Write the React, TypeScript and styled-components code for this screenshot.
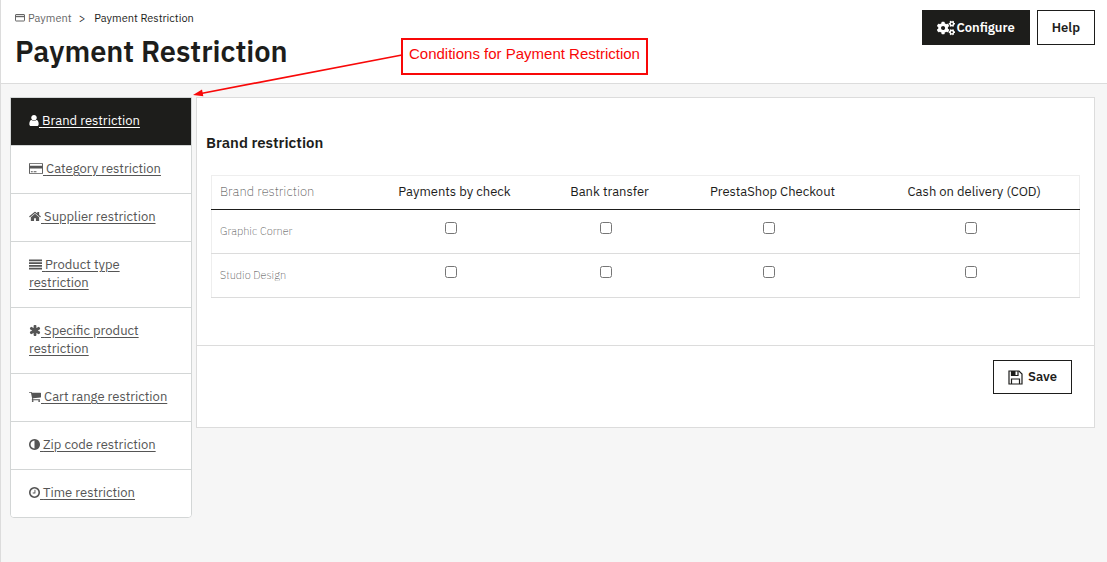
import React from "react";
import styled, { createGlobalStyle } from "styled-components";
import { FaCogs } from "react-icons/fa";

const GlobalStyle = createGlobalStyle`
  *, *::before, *::after { box-sizing: border-box; }
  body {
    margin: 0;
    background: #f6f6f6;
    color: #1d1d1b;
    font-family: "IBM Plex Sans", Roboto, "Liberation Sans", sans-serif;
    font-size: 13px;
    line-height: 18px;
  }
`;

const Page = styled.div`
  position: relative;
  min-height: 100vh;
  border-left: 1px solid #dcdcdc;
`;

const Header = styled.header`
  display: flex;
  justify-content: space-between;
  align-items: flex-start;
  padding: 10px 12px 12px 14px;
  background: #fff;
  border-bottom: 1px solid #dcdcdc;
`;

const Breadcrumb = styled.nav`
  display: flex;
  align-items: center;
  font-size: 11px;
  line-height: 16px;
`;

const CrumbLink = styled.a`
  display: flex;
  align-items: center;
  gap: 3px;
  color: #666;
  text-decoration: none;
`;

const Separator = styled.span`
  margin: 0 9px 0 7px;
`;

const Title = styled.h1`
  margin: 5px 0 0;
  font-size: 29px;
  line-height: 40px;
  font-weight: 600;
`;

const Actions = styled.div`
  display: flex;
  gap: 7px;
`;

const Button = styled.button<{ $dark?: boolean; $compact?: boolean }>`
  display: inline-flex;
  align-items: center;
  justify-content: center;
  gap: ${(p) => (p.$dark ? 1 : 5)}px;
  height: ${(p) => (p.$compact ? 34 : 35)}px;
  padding: 0 14px;
  border: 1px solid #1d1d1b;
  background: ${(p) => (p.$dark ? "#1d1d1b" : "#fff")};
  color: ${(p) => (p.$dark ? "#fff" : "#1d1d1b")};
  font: inherit;
  font-weight: 600;
  cursor: pointer;
`;

const Content = styled.div`
  display: flex;
  align-items: flex-start;
  gap: 4px;
  padding: 13px 12px 24px 9px;
`;

const Sidebar = styled.nav`
  flex: 0 0 182px;
  border: 1px solid #d3d6d6;
  border-radius: 0 0 4px 4px;
  overflow: hidden;
  background: #fff;
`;

const SideItem = styled.a<{ $active?: boolean }>`
  display: block;
  padding: 14px 18px 15px;
  border-bottom: 1px solid #d3d6d6;
  background: ${(p) => (p.$active ? "#1d1d1b" : "#fff")};
  color: ${(p) => (p.$active ? "#fff" : "#555")};
  text-decoration: underline;
  text-underline-offset: 2px;
  &:last-child { border-bottom: 0; }
`;

const Glyph = styled.svg`
  height: 13px;
  fill: currentColor;
  vertical-align: -2px;
`;

const Panel = styled.form`
  flex: 1;
  min-width: 0;
  border: 1px solid #dcdcdc;
  background: #fff;
`;

const PanelBody = styled.div`
  padding: 35px 15px 47px 14px;
`;

const PanelTitle = styled.h2`
  margin: 0 0 22px -5px;
  font-size: 15px;
  line-height: 20px;
  font-weight: 600;
`;

const Table = styled.table`
  width: 100%;
  table-layout: fixed;
  border-collapse: collapse;
  border: 1px solid #eee;
`;

const HeadCell = styled.th<{ $first?: boolean }>`
  height: 34px;
  padding: 0 8px 2px ${(p) => (p.$first ? 8 : 14)}px;
  border-bottom: 1px solid #1d1d1b;
  text-align: ${(p) => (p.$first ? "left" : "center")};
  font-weight: ${(p) => (p.$first ? 200 : 400)};
  color: ${(p) => (p.$first ? "#444" : "#1d1d1b")};
`;

const RowName = styled.th`
  height: 44px;
  padding: 0 8px 2px;
  border-bottom: 1px solid #dcdcdc;
  text-align: left;
  font-size: 11px;
  font-weight: 200;
  color: #444;
`;

const CheckCell = styled.td`
  padding: 0 9px 8px 8px;
  border-bottom: 1px solid #dcdcdc;
  text-align: center;
  line-height: 0;
`;

const Check = styled.input`
  width: 12px;
  height: 12px;
  margin: 0;
`;

const PanelFooter = styled.footer`
  display: flex;
  justify-content: flex-end;
  padding: 14px 22px 33px;
  border-top: 1px solid #dcdcdc;
`;

const Callout = styled.div`
  position: absolute;
  top: 38px;
  left: 400px;
  height: 37px;
  padding: 5px 6px;
  border: 2px solid #f80808;
  background: #fff;
  color: #f80808;
  font-family: "Liberation Sans", Arial, sans-serif;
  font-size: 15px;
  white-space: nowrap;
`;

const Arrow = styled.svg`
  position: absolute;
  top: 50px;
  left: 190px;
  pointer-events: none;
`;

const CardShape = (
  <path
    fillRule="evenodd"
    d="M160 128h1600q66 0 113 47t47 113v1216q0 66-47 113t-113 47H160q-66 0-113-47T0 1504V288q0-66 47-113t113-47zm0 128q-32 0-32 32v224h1664V288q0-32-32-32zM128 896v608q0 32 32 32h1600q32 0 32-32V896zM256 1280h256v128H256zM640 1280h384v128H640z"
  />
);

const items = [
  {
    label: "Brand restriction",
    width: 10,
    box: "256 0 1280 1792",
    shape: <path d="M1536 1399q0 109-62.5 187t-150.5 78h-854q-88 0-150.5-78t-62.5-187q0-85 8.5-160.5t31.5-152 58.5-131 94-89 134.5-34.5q131 128 313 128t313-128q76 0 134.5 34.5t94 89 58.5 131 31.5 152 8.5 160.5zm-256-887q0 159-112.5 271.5t-271.5 112.5-271.5-112.5-112.5-271.5 112.5-271.5 271.5-112.5 271.5 112.5 112.5 271.5z" />,
  },
  { label: "Category restriction", width: 14, box: "0 0 1920 1792", shape: CardShape },
  {
    label: "Supplier restriction",
    width: 12,
    box: "64 0 1664 1792",
    shape: <path d="M1472 992v480q0 26-19 45t-45 19h-384v-384h-256v384h-384q-26 0-45-19t-19-45v-480q0-1 .5-3t.5-3l575-474 575 474q1 2 1 6zm223-69l-62 74q-8 9-21 11h-3q-13 0-21-7l-692-577-692 577q-12 8-24 7-13-2-21-11l-62-74q-8-10-7-23.5t11-21.5l719-599q32-26 76-26t76 26l244 204v-195q0-14 9-23t23-9h192q14 0 23 9t9 23v408l219 182q10 8 11 21.5t-7 23.5z" />,
  },
  {
    label: "Product type restriction",
    width: 13,
    box: "0 0 1792 1792",
    shape: <path d="M0 192h1792v240H0zM0 576h1792v240H0zM0 960h1792v240H0zM0 1344h1792v240H0z" />,
  },
  {
    label: "Specific product restriction",
    width: 12,
    box: "64 0 1664 1792",
    shape: <path d="M1546 1050q46 26 59.5 77.5t-12.5 97.5l-64 110q-26 46-77.5 59.5t-97.5-12.5l-266-153v307q0 52-38 90t-90 38h-128q-52 0-90-38t-38-90v-307l-266 153q-46 26-97.5 12.5t-77.5-59.5l-64-110q-26-46-12.5-97.5t59.5-77.5l266-154-266-154q-46-26-59.5-77.5t12.5-97.5l64-110q26-46 77.5-59.5t97.5 12.5l266 153v-307q0-52 38-90t90-38h128q52 0 90 38t38 90v307l266-153q46-26 97.5-12.5t77.5 59.5l64 110q26 46 12.5 97.5t-59.5 77.5l-266 154z" />,
  },
  {
    label: "Cart range restriction",
    width: 12,
    box: "64 0 1664 1792",
    shape: <path d="M704 1536q0 52-38 90t-90 38-90-38-38-90 38-90 90-38 90 38 38 90zm896 0q0 52-38 90t-90 38-90-38-38-90 38-90 90-38 90 38 38 90zm128-1088v512q0 24-16.5 42.5t-40.5 21.5l-1044 122q13 60 13 70 0 16-24 64h920q26 0 45 19t19 45-19 45-45 19h-1024q-26 0-45-19t-19-45q0-11 8-31.5t16-36 21.5-40 15.5-29.5l-177-823h-204q-26 0-45-19t-19-45 19-45 45-19h256q16 0 28.5 6.5t19.5 15.5 13 24.5 8 26 5.5 29.5 4.5 26h1201q26 0 45 19t19 45z" />,
  },
  {
    label: "Zip code restriction",
    width: 11,
    box: "128 0 1536 1792",
    shape: <path d="M896 1440v-1088q-148 0-273 73t-198 198-73 273 73 273 198 198 273 73zm768-544q0 209-103 385.5t-279.5 279.5-385.5 103-385.5-103-279.5-279.5-103-385.5 103-385.5 279.5-279.5 385.5-103 385.5 103 279.5 279.5 103 385.5z" />,
  },
  {
    label: "Time restriction",
    width: 11,
    box: "128 0 1536 1792",
    shape: <path d="M1024 544v448q0 14-9 23t-23 9h-320q-14 0-23-9t-9-23v-64q0-14 9-23t23-9h224v-352q0-14 9-23t23-9h64q14 0 23 9t9 23zm416 352q0-148-73-273t-198-198-273-73-273 73-198 198-73 273 73 273 198 198 273 73 273-73 198-198 73-273zm224 0q0 209-103 385.5t-279.5 279.5-385.5 103-385.5-103-279.5-279.5-103-385.5 103-385.5 279.5-279.5 385.5-103 385.5 103 279.5 279.5 103 385.5z" />,
  },
];

const methods = [
  { name: "Payments by check", share: 172 },
  { name: "Bank transfer", share: 138 },
  { name: "PrestaShop Checkout", share: 188 },
  { name: "Cash on delivery (COD)", share: 216 },
];
const brands = ["Graphic Corner", "Studio Design"];

export default function App() {
  return (
    <>
      <GlobalStyle />
      <Page>
        <Header>
          <div>
            <Breadcrumb aria-label="Breadcrumb">
              <CrumbLink href="#payment">
                <svg width="10" height="8" viewBox="0 0 10 8" fill="none" stroke="currentColor" aria-hidden="true">
                  <rect x="0.5" y="0.5" width="9" height="6.5" rx="0.5" />
                  <path d="M0.5 2.5h9" strokeWidth="1.4" />
                </svg>
                Payment
              </CrumbLink>
              <Separator>&gt;</Separator>
              <span>Payment Restriction</span>
            </Breadcrumb>
            <Title>Payment Restriction</Title>
          </div>
          <Actions>
            <Button type="button" $dark>
              <FaCogs size={18} aria-hidden="true" />
              Configure
            </Button>
            <Button type="button">Help</Button>
          </Actions>
        </Header>
        <Content>
          <Sidebar aria-label="Restrictions">
            {items.map((item, i) => (
              <SideItem key={item.label} href={`#restriction-${i + 1}`} $active={i === 0}>
                <Glyph width={item.width} viewBox={item.box} aria-hidden="true">
                  {item.shape}
                </Glyph>{" "}
                {item.label}
              </SideItem>
            ))}
          </Sidebar>
          <Panel onSubmit={(e) => e.preventDefault()}>
            <PanelBody>
              <PanelTitle>Brand restriction</PanelTitle>
              <Table>
                <colgroup>
                  <col width={154} />
                  {methods.map((m) => (
                    <col key={m.name} width={m.share} />
                  ))}
                </colgroup>
                <thead>
                  <tr>
                    <HeadCell scope="col" $first>Brand restriction</HeadCell>
                    {methods.map((m) => (
                      <HeadCell key={m.name} scope="col">{m.name}</HeadCell>
                    ))}
                  </tr>
                </thead>
                <tbody>
                  {brands.map((brand) => (
                    <tr key={brand}>
                      <RowName scope="row">{brand}</RowName>
                      {methods.map((m) => (
                        <CheckCell key={m.name}>
                          <Check type="checkbox" aria-label={`${brand}: ${m.name}`} />
                        </CheckCell>
                      ))}
                    </tr>
                  ))}
                </tbody>
              </Table>
            </PanelBody>
            <PanelFooter>
              <Button type="submit" $compact>
                <svg width="15" height="15" viewBox="0 0 15 15" fill="none" stroke="currentColor" strokeWidth="1.2" aria-hidden="true">
                  <path d="M1 1h10l3 3v10H1z" />
                  <path d="M3.5 1v4.5h6.5V1M3.5 14V9h8v5" />
                  <path d="M4 1h3.5v4H4z" fill="currentColor" stroke="none" />
                </svg>
                Save
              </Button>
            </PanelFooter>
          </Panel>
        </Content>
        <Callout>Conditions for Payment Restriction</Callout>
        <Arrow width="212" height="50" viewBox="0 0 212 50" aria-hidden="true">
          <path d="M211 5L10 43.5" stroke="#f80808" strokeWidth="1.7" />
          <path d="M2 45l9-5.5 1.3 6.8z" fill="#f80808" />
        </Arrow>
      </Page>
    </>
  );
}
